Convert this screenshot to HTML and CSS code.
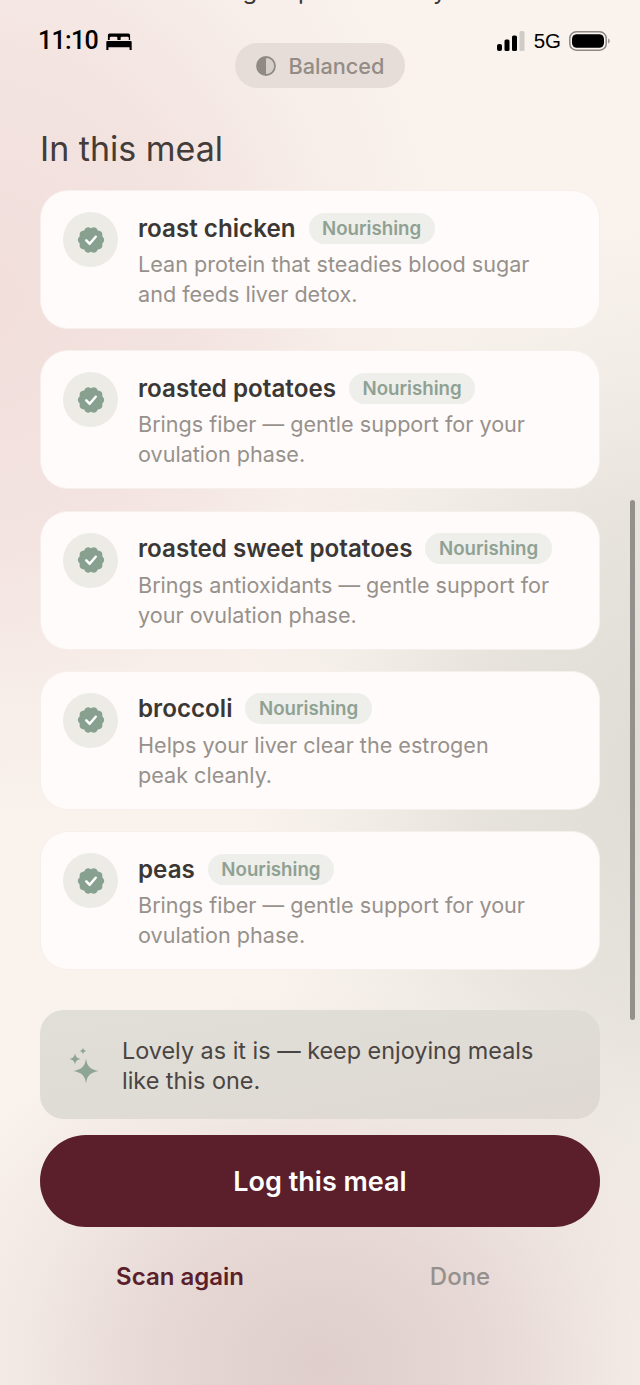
FILE: index.html
```html
<!DOCTYPE html>
<html lang="en">
<head>
<meta charset="utf-8">
<title>In this meal</title>
<link rel="stylesheet" href="styles.css">
</head>
<body>
<div class="screen">
  <div class="clipped-line">Nourishing help in the body now.</div>
  <header class="status">
    <div class="status-left">
      <span class="time">11:10</span>
      <svg class="bed" viewBox="0 0 24 18" width="26" height="19"><path fill="#000" d="M3 1.500h18a1.500 1.500 0 0 1 1.500 1.500v4.500h-1.200V5.800a1.300 1.300 0 0 0-1.300-1.300h-5.200a1.300 1.300 0 0 0-1.300 1.300v1.700h-3V5.800a1.300 1.300 0 0 0-1.300-1.300H4.500a1.300 1.300 0 0 0-1.300 1.300v1.700H1.500V3A1.500 1.500 0 0 1 3 1.500zM1 8.500h22a1 1 0 0 1 1 1V17h-2v-2.500H2V17H0V9.500a1 1 0 0 1 1-1z"/></svg>
    </div>
    <div class="status-right">
      <svg class="signal" viewBox="0 0 28 20" width="28" height="20"><rect x="0" y="13" width="5" height="7" rx="2" fill="#000"/><rect x="7.500" y="8.500" width="5" height="11.500" rx="1.500" fill="#000"/><rect x="15" y="4.500" width="5" height="15.500" rx="1.500" fill="#000"/><rect x="22.500" y="0" width="5" height="20" rx="1.500" fill="#cfcbc8"/></svg>
      <span class="net">5G</span>
      <svg class="battery" viewBox="0 0 41 20" width="41" height="20"><rect x="0.800" y="0.800" width="36.400" height="18.400" rx="6.500" fill="none" stroke="#8c8785" stroke-width="1.500"/><rect x="3" y="3.200" width="32" height="13.600" rx="4.800" fill="#000"/><path d="M39 7.500c1.300.4 1.800 1.400 1.800 2.500s-.5 2.100-1.800 2.500z" fill="#a09b98"/></svg>
    </div>
  </header>

  <div class="verdict-wrap">
    <div class="verdict">
      <svg class="half" viewBox="0 0 20 20" width="20" height="20"><circle cx="10" cy="10" r="9" fill="#d6cfc9" stroke="#8f8a82" stroke-width="1.800"/><path d="M10 1a9 9 0 0 0 0 18z" fill="#8f8a82"/></svg>
      <span>Balanced</span>
    </div>
  </div>

  <h1 class="title">In this meal</h1>

  <div class="list">
    <article class="card">
      <div class="badge"><svg viewBox="0 0 30 30" width="30" height="30"><use href="#seal"/></svg></div>
      <div class="body">
        <div class="head"><span class="name">roast chicken</span><span class="tag">Nourishing</span></div>
        <p class="desc">Lean protein that steadies blood sugar<br>and feeds liver detox.</p>
      </div>
    </article>
    <article class="card">
      <div class="badge"><svg viewBox="0 0 30 30" width="30" height="30"><use href="#seal"/></svg></div>
      <div class="body">
        <div class="head"><span class="name">roasted potatoes</span><span class="tag">Nourishing</span></div>
        <p class="desc">Brings fiber — gentle support for your<br>ovulation phase.</p>
      </div>
    </article>
    <article class="card">
      <div class="badge"><svg viewBox="0 0 30 30" width="30" height="30"><use href="#seal"/></svg></div>
      <div class="body">
        <div class="head"><span class="name">roasted sweet potatoes</span><span class="tag">Nourishing</span></div>
        <p class="desc">Brings antioxidants — gentle support for<br>your ovulation phase.</p>
      </div>
    </article>
    <article class="card">
      <div class="badge"><svg viewBox="0 0 30 30" width="30" height="30"><use href="#seal"/></svg></div>
      <div class="body">
        <div class="head"><span class="name">broccoli</span><span class="tag">Nourishing</span></div>
        <p class="desc">Helps your liver clear the estrogen<br>peak cleanly.</p>
      </div>
    </article>
    <article class="card">
      <div class="badge"><svg viewBox="0 0 30 30" width="30" height="30"><use href="#seal"/></svg></div>
      <div class="body">
        <div class="head"><span class="name">peas</span><span class="tag">Nourishing</span></div>
        <p class="desc">Brings fiber — gentle support for your<br>ovulation phase.</p>
      </div>
    </article>
  </div>

  <div class="tip">
    <svg class="spark" viewBox="0 0 32 38" width="32" height="38"><path fill="#8ea596" d="M18 11.500c1 7.500 3.500 10.500 12.500 12.500-9 2-11.500 5-12.500 12.500-1-7.500-3.500-10.500-12.500-12.500 9-2 11.500-5 12.500-12.500z"/><path fill="#8ea596" d="M7 6c.5 3.500 1.700 5.300 6 6-4.300.7-5.500 2.500-6 6-.5-3.500-1.700-5.300-6-6 4.300-.7 5.500-2.500 6-6z"/><path fill="#8ea596" d="M15 .5c.3 2 1 3 3.500 3.500-2.500.5-3.200 1.500-3.500 3.500-.3-2-1-3-3.500-3.500C14 3.500 14.700 2.500 15 .5z"/></svg>
    <p>Lovely as it is — keep enjoying meals<br>like this one.</p>
  </div>

  <button class="primary">Log this meal</button>

  <div class="actions">
    <span class="scan">Scan again</span>
    <span class="done">Done</span>
  </div>

  <div class="scrollbar"></div>

  <svg class="defs" width="0" height="0"><defs>
    <g id="seal">
      <path fill="#87a08f" d="M26.220 11.350Q30.200 15 26.220 18.650Q27.300 23.930 21.940 24.550Q19.700 29.460 15 26.800Q10.300 29.460 8.060 24.550Q2.700 23.930 3.780 18.650Q-.2 15 3.780 11.350Q2.700 6.070 8.060 5.450Q10.300 .54 15 3.200Q19.700 .54 21.940 5.450Q27.300 6.070 26.220 11.350z"/>
      <path fill="none" stroke="#fff" stroke-width="2.500" stroke-linecap="round" stroke-linejoin="round" d="M10.300 15.300l3.400 3.500 6-7"/>
    </g>
  </defs></svg>
</div>
</body>
</html>
```
FILE: styles.css
```css
* { box-sizing: border-box; }
html, body { margin: 0; padding: 0; }
body { font-family: Inter, "Noto Sans", "Liberation Sans", sans-serif; }
.screen {
  position: relative;
  width: 640px;
  height: 1385px;
  overflow: hidden;
  padding: 0 40px;
  background:
    radial-gradient(ellipse 430px 380px at 320px 1365px, #dfcecb 0%, rgba(223,206,203,.72) 38%, rgba(223,206,203,.28) 70%, rgba(223,206,203,0) 100%),
    radial-gradient(ellipse 420px 560px at 660px 770px, #dedcd4 0%, rgba(222,220,212,.65) 45%, rgba(222,220,212,.2) 75%, rgba(222,220,212,0) 100%),
    radial-gradient(ellipse 480px 540px at -20px 300px, #f1dedb 0%, rgba(241,222,219,.72) 45%, rgba(241,222,219,.22) 75%, rgba(241,222,219,0) 100%),
    #f9f2ed;
}
.clipped-line {
  position: absolute;
  top: -23px;
  left: 0;
  width: 640px;
  text-align: center;
  font-size: 24px;
  line-height: 28px;
  color: #3d3735;
}
.status {
  display: flex;
  justify-content: space-between;
  align-items: center;
  height: 26px;
  margin: 28px -10px 0 -2px;
}
.status-left { display: flex; align-items: center; gap: 8px; }
.time { font-size: 25px; font-weight: 500; letter-spacing: -.7px; color: #000; line-height: 26px; font-family: Roboto, "Liberation Sans", sans-serif; }
.bed { display: block; }
.status-right { display: flex; align-items: center; gap: 8px; }
.signal, .battery { display: block; }
.net { font-size: 20.500px; color: #000; font-family: "Liberation Sans", sans-serif; margin-left: 1px; }
.verdict-wrap { display: flex; justify-content: center; margin-top: -11px; }
.verdict {
  display: flex;
  align-items: center;
  gap: 12px;
  height: 45px;
  padding: 0 20px 0 21px;
  border-radius: 23px;
  background: #e6ddd8;
  color: #938c86;
  font-size: 21.700px;
  font-weight: 500;
}
.half { display: block; }
.title {
  margin: 37px 0 0;
  font-size: 34px;
  line-height: 48px;
  font-weight: 400;
  color: #433c39;
}
.list { display: flex; flex-direction: column; gap: 21.300px; margin-top: 17px; }
.card {
  display: flex;
  gap: 20px;
  height: 139px;
  padding: 21px 22px 0;
  border-radius: 28px;
  background: #fefbfa;
  border: 1.500px solid #f7efec;
}
.badge {
  flex: none;
  display: flex;
  align-items: center;
  justify-content: center;
  width: 55px;
  height: 55px;
  border-radius: 50%;
  background: #ecebe6;
}
.badge svg { display: block; }
.body { min-width: 0; }
.head { display: flex; align-items: center; gap: 13px; height: 32px; }
.name { font-size: 24.200px; font-weight: 600; color: #3b3735; white-space: nowrap; }
.tag {
  display: flex;
  align-items: center;
  height: 31px;
  padding: 0 13.500px;
  border-radius: 16px;
  background: #eeeeea;
  color: #8ea193;
  font-size: 18.700px;
  font-weight: 600;
}
.desc {
  margin: 5px 0 0;
  font-size: 21.600px;
  line-height: 30px;
  color: #97918c;
}
.tip {
  display: flex;
  align-items: center;
  gap: 22px;
  height: 109px;
  margin-top: 40px;
  padding: 2px 28px 0;
  border-radius: 24px;
  background: linear-gradient(170deg, #e0dfd8, #dfd8d3);
}
.spark { display: block; flex: none; }
.tip p {
  margin: 0;
  font-size: 23.400px;
  line-height: 30px;
  color: #4a4542;
}
.primary {
  display: block;
  width: 100%;
  height: 92px;
  margin-top: 16px;
  border: 0;
  border-radius: 46px;
  background: #5a1f2b;
  color: #fff;
  font: 600 27px Inter, sans-serif;
}
.actions { display: flex; margin-top: 34px; font-size: 24px; line-height: 32px; }
.actions span { flex: 1; text-align: center; }
.scan { color: #5a1f2b; font-weight: 600; }
.done { color: #96908c; font-weight: 500; }
.scrollbar {
  position: absolute;
  left: 630px;
  top: 500px;
  width: 5px;
  height: 520px;
  border-radius: 3px;
  background: #94918c;
}
.defs { position: absolute; }
```
